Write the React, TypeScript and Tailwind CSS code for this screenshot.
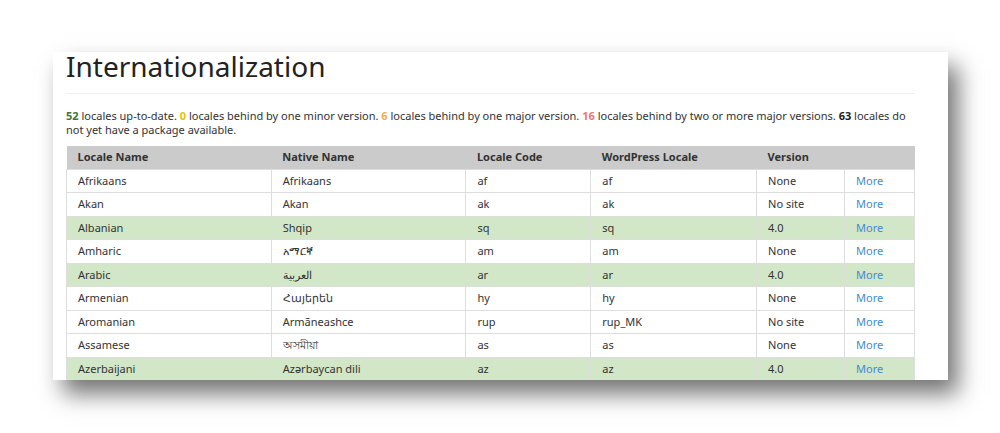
const rows: [string, string, string, string, string, boolean][] = [
  ['Afrikaans', 'Afrikaans', 'af', 'af', 'None', false],
  ['Akan', 'Akan', 'ak', 'ak', 'No site', false],
  ['Albanian', 'Shqip', 'sq', 'sq', '4.0', true],
  ['Amharic', 'አማርኛ', 'am', 'am', 'None', false],
  ['Arabic', 'العربية', 'ar', 'ar', '4.0', true],
  ['Armenian', 'Հայերեն', 'hy', 'hy', 'None', false],
  ['Aromanian', 'Armãneashce', 'rup', 'rup_MK', 'No site', false],
  ['Assamese', 'অসমীয়া', 'as', 'as', 'None', false],
  ['Azerbaijani', 'Azərbaycan dili', 'az', 'az', '4.0', true],
]

const widths = ['w-[205px]', 'w-[195px]', 'w-[125px]', 'w-[166px]', 'w-[88px]', 'w-[70px]']

export default function App() {
  return (
    <div className="h-[433px] w-[1000px] bg-white pl-[53px] pt-[52px] font-['Liberation_Sans']">
      <div className="h-[328px] w-[895px] overflow-hidden bg-white pl-[13px] pr-[33px] shadow-[10px_14px_22px_rgba(0,0,0,0.55)]">
        <h1 className="mt-[-1px] text-[28px] leading-[31px] text-[#222]">Internationalization</h1>
        <div className="mt-[11px] border-t border-[#eee]" />
        <p className="mt-[15px] text-[11px] leading-[14px] text-[#333]">
          <b className="text-[#3c763d]">52</b> locales up-to-date. <b className="text-[#e6c000]">0</b> locales behind by one minor version.{' '}
          <b className="text-[#f0ad4e]">6</b> locales behind by one major version. <b className="text-[#e8787a]">16</b> locales behind by two or more major versions.{' '}
          <b className="text-[#222]">63</b> locales do not yet have a package available.
        </p>
        <table className="mt-[9px] border-collapse text-[11px] text-[#333]">
          <thead>
            <tr className="h-[23px] bg-[#cbcbcb]">
              {['Locale Name', 'Native Name', 'Locale Code', 'WordPress Locale', 'Version', ''].map((h, i) => (
                <th key={i} className={`${widths[i]} px-[11px] text-left font-bold`}>{h}</th>
              ))}
            </tr>
          </thead>
          <tbody>
            {rows.map((r) => (
              <tr key={r[0]} className={`h-[23.5px] ${r[5] ? 'bg-[#d2e6c8]' : 'bg-white'}`}>
                {r.slice(0, 5).map((c, i) => (
                  <td key={i} className="border border-[#ddd] px-[11px]">{c as string}</td>
                ))}
                <td className="border border-[#ddd] px-[11px] text-[#428bca]">More</td>
              </tr>
            ))}
          </tbody>
        </table>
      </div>
    </div>
  )
}
